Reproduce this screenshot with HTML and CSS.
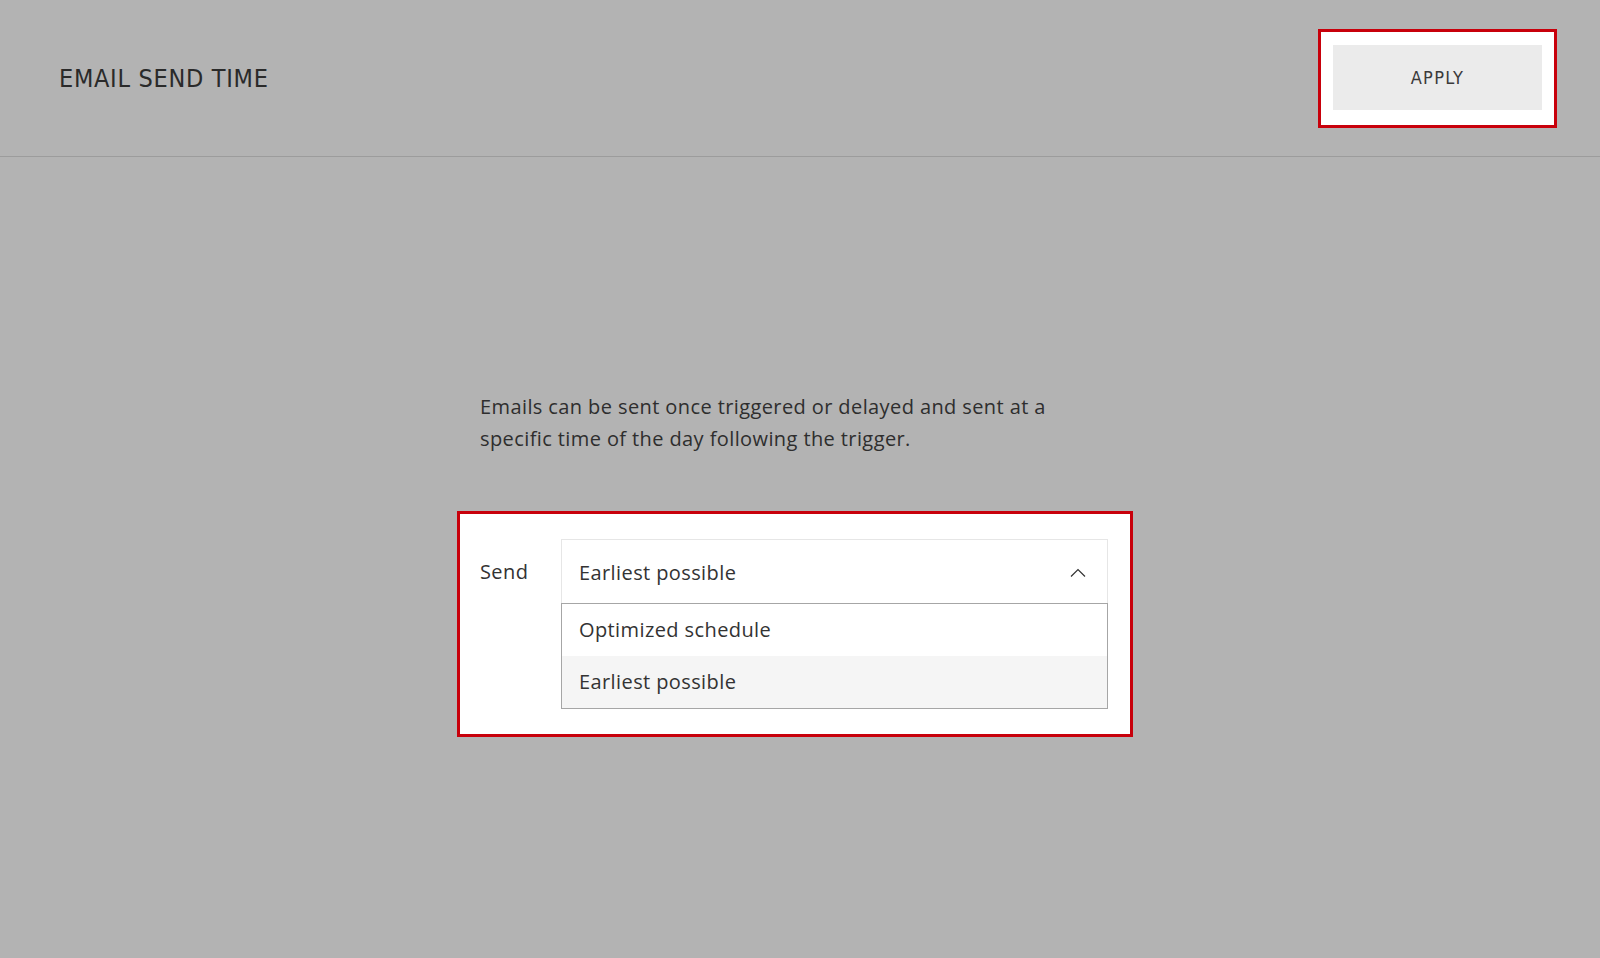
FILE: index.html
```html
<!DOCTYPE html>
<html lang="en">
<head>
  <meta charset="UTF-8">
  <title>Email Send Time</title>
  <link rel="stylesheet" href="styles.css">
</head>
<body>
  <header class="topbar">
    <h1 class="title">EMAIL SEND TIME</h1>
    <div class="highlight apply-wrap">
      <button class="apply">APPLY</button>
    </div>
  </header>

  <main class="main">
    <div class="content">
      <p class="intro">Emails can be sent once triggered or delayed and sent at a specific time of the day following the trigger.</p>

      <div class="highlight form-box">
        <label class="field-label">Send</label>
        <div class="select">
          <div class="select-value">
            <span>Earliest possible</span>
            <svg class="chevron" width="16" height="10" viewBox="0 0 16 10">
              <path d="M1 8.5 L8 1.5 L15 8.5" fill="none" stroke="#333" stroke-width="1.2"/>
            </svg>
          </div>
          <ul class="options">
            <li class="option">Optimized schedule</li>
            <li class="option selected">Earliest possible</li>
          </ul>
        </div>
      </div>
    </div>
  </main>
</body>
</html>
```

FILE: styles.css
```css
* {
  box-sizing: border-box;
}

body {
  margin: 0;
  min-height: 958px;
  background: #b3b3b3;
  color: #2b2b2b;
  font-family: "Open Sans", "Lato", sans-serif;
}

.topbar {
  height: 157px;
  display: flex;
  align-items: center;
  justify-content: space-between;
  padding: 0 43px 0 59px;
  border-bottom: 1px solid #9c9c9c;
}

.title {
  margin: 0;
  font-family: "DejaVu Sans Condensed", "DejaVu Sans", sans-serif;
  font-stretch: condensed;
  font-weight: normal;
  font-size: 25px;
  letter-spacing: 0.7px;
  color: #2a2a2a;
}

.highlight {
  background: #fff;
  border: 3px solid #c8000b;
}

.apply-wrap {
  padding: 13px 12px 15px;
}

.apply {
  display: block;
  width: 209px;
  height: 65px;
  border: none;
  background: #ebebeb;
  color: #3a3a3a;
  font-family: "DejaVu Sans Condensed", "DejaVu Sans", sans-serif;
  font-stretch: condensed;
  font-size: 18px;
  letter-spacing: 1.3px;
  cursor: pointer;
}

.main {
  display: flex;
  justify-content: center;
  padding: 234px 12px 0 0;
}

.content {
  width: 628px;
}

.intro {
  margin: 0 0 56px;
  font-size: 20px;
  letter-spacing: 0.4px;
  line-height: 32px;
  color: #2e2e2e;
}

.form-box {
  display: flex;
  align-items: flex-start;
  margin: 0 -25px 0 -23px;
  padding: 25px 22px 25px 20px;
}

.field-label {
  width: 81px;
  font-size: 20px;
  letter-spacing: 0.4px;
  line-height: 66px;
  color: #333;
}

.select {
  flex: 1;
}

.select-value {
  height: 64px;
  display: flex;
  align-items: center;
  justify-content: space-between;
  padding: 2px 21px 0 17px;
  border: 1px solid #e6e6e6;
  border-bottom: none;
  font-size: 20px;
  letter-spacing: 0.4px;
  color: #333;
}

.options {
  list-style: none;
  margin: 0;
  padding: 0;
  border: 1px solid #a6a6a6;
}

.option {
  height: 52px;
  line-height: 52px;
  padding-left: 17px;
  font-size: 20px;
  letter-spacing: 0.4px;
  color: #333;
}

.option.selected {
  background: #f5f5f5;
}
```
